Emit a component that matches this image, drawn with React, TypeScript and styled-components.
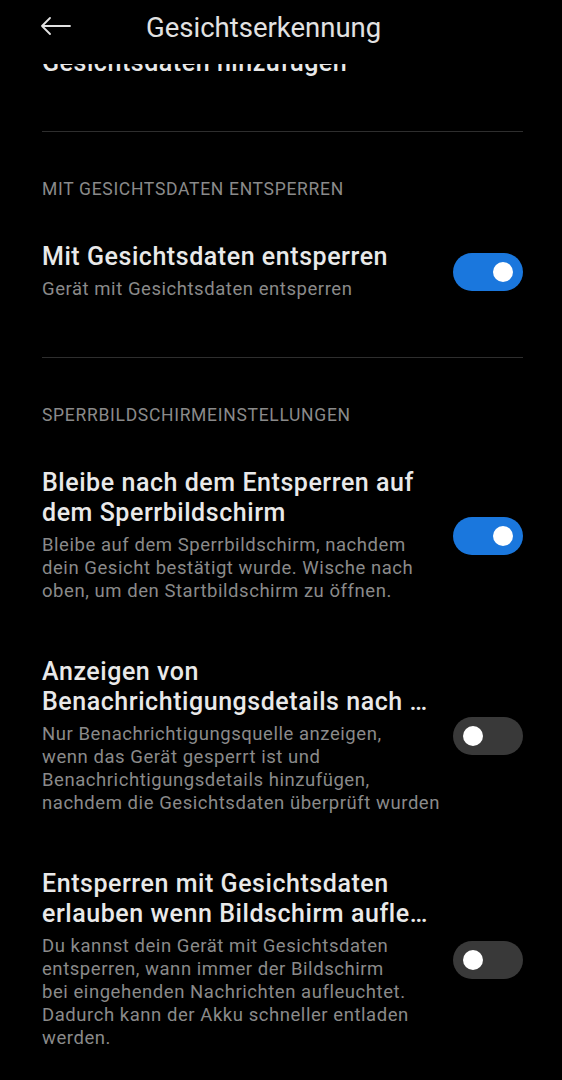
import styled, { createGlobalStyle } from "styled-components";

const GlobalStyle = createGlobalStyle`
  html, body {
    margin: 0;
    padding: 0;
    background: #000;
  }
  body {
    font-family: Roboto, "Noto Sans", sans-serif;
    -webkit-font-smoothing: antialiased;
  }
`;

const Page = styled.div`
  width: 562px;
  height: 1080px;
  overflow: hidden;
  background: #000;
  display: flex;
  flex-direction: column;
`;

const Header = styled.header`
  position: relative;
  z-index: 2;
  height: 64px;
  flex: none;
  background: #000;
  display: flex;
  align-items: flex-start;
  padding: 0 40px;
`;

const BackButton = styled.div`
  width: 34px;
  height: 52px;
  display: flex;
  align-items: center;
  color: #e2e2e2;
`;

const HeaderTitle = styled.h1`
  flex: 1;
  margin: 0;
  padding-left: 72px;
  height: 55px;
  line-height: 55px;
  font-size: 27.5px;
  font-weight: 400;
  color: #e2e2e2;
`;

const Content = styled.main`
  margin-top: -16px;
  padding: 0 39px 0 42px;
  display: flex;
  flex-direction: column;
`;

const Section = styled.section<{ $bottom: number }>`
  display: flex;
  flex-direction: column;
  padding-bottom: ${(p) => p.$bottom}px;
`;

const Divider = styled.hr`
  margin: 0;
  border: none;
  height: 1px;
  background: #2e2e2e;
`;

const SectionLabel = styled.div`
  padding: 47px 0 16px;
  font-size: 17.5px;
  letter-spacing: 0.7px;
  line-height: 20px;
  color: #8a8a8a;
  text-transform: uppercase;
`;

const Row = styled.div<{ $compact?: boolean }>`
  display: flex;
  align-items: center;
  gap: 10px;
  padding: ${(p) => (p.$compact ? "0 0 53px" : "27px 0")};
`;

const Texts = styled.div`
  flex: 1;
  min-width: 0;
  display: flex;
  flex-direction: column;
`;

const Title = styled.div`
  font-size: 25px;
  letter-spacing: 0.55px;
  line-height: 30px;
  font-weight: 500;
  color: #e9e9e9;
`;

const Subtitle = styled.div`
  margin-top: 6px;
  font-size: 18.5px;
  letter-spacing: 0.55px;
  line-height: 23px;
  color: #8a8a8a;
`;

const Line = styled.span`
  display: block;
  white-space: nowrap;
`;

const Track = styled.div<{ $on: boolean }>`
  flex: none;
  width: 70px;
  height: 38px;
  border-radius: 19px;
  background: ${(p) => (p.$on ? "#1a77dd" : "#393939")};
  display: flex;
  align-items: center;
  justify-content: ${(p) => (p.$on ? "flex-end" : "flex-start")};
  padding: 0 10px;
  box-sizing: border-box;
`;

const Knob = styled.div`
  width: 20px;
  height: 20px;
  border-radius: 50%;
  background: #fff;
`;

const BackArrow = () => (
  <svg width="31" height="18" viewBox="0 0 31 18" fill="none">
    <path
      d="M30 9H2M10 1L2 9l8 8"
      stroke="currentColor"
      strokeWidth="1.8"
      strokeLinecap="round"
      strokeLinejoin="round"
    />
  </svg>
);

interface SettingProps {
  title: string[];
  subtitle?: string[];
  on?: boolean;
  compact?: boolean;
}

const Setting = ({ title, subtitle, on, compact }: SettingProps) => (
  <Row $compact={compact}>
    <Texts>
      <Title>
        {title.map((t) => (
          <Line key={t}>{t}</Line>
        ))}
      </Title>
      {subtitle ? (
        <Subtitle>
          {subtitle.map((t) => (
            <Line key={t}>{t}</Line>
          ))}
        </Subtitle>
      ) : null}
    </Texts>
    {on !== undefined ? (
      <Track $on={on}>
        <Knob />
      </Track>
    ) : null}
  </Row>
);

export default function App() {
  return (
    <>
      <GlobalStyle />
      <Page>
        <Header>
          <BackButton>
            <BackArrow />
          </BackButton>
          <HeaderTitle>Gesichtserkennung</HeaderTitle>
        </Header>
        <Content>
          <Section $bottom={0}>
            <Setting title={["Gesichtsdaten hinzufügen"]} compact />
          </Section>
          <Divider />
          <Section $bottom={29}>
            <SectionLabel>Mit Gesichtsdaten entsperren</SectionLabel>
            <Setting
              title={["Mit Gesichtsdaten entsperren"]}
              subtitle={["Gerät mit Gesichtsdaten entsperren"]}
              on
            />
          </Section>
          <Divider />
          <Section $bottom={0}>
            <SectionLabel>Sperrbildschirmeinstellungen</SectionLabel>
            <Setting
              title={["Bleibe nach dem Entsperren auf", "dem Sperrbildschirm"]}
              subtitle={[
                "Bleibe auf dem Sperrbildschirm, nachdem",
                "dein Gesicht bestätigt wurde. Wische nach",
                "oben, um den Startbildschirm zu öffnen.",
              ]}
              on
            />
            <Setting
              title={["Anzeigen von", "Benachrichtigungsdetails nach …"]}
              subtitle={[
                "Nur Benachrichtigungsquelle anzeigen,",
                "wenn das Gerät gesperrt ist und",
                "Benachrichtigungsdetails hinzufügen,",
                "nachdem die Gesichtsdaten überprüft wurden",
              ]}
              on={false}
            />
            <Setting
              title={["Entsperren mit Gesichtsdaten", "erlauben wenn Bildschirm aufle…"]}
              subtitle={[
                "Du kannst dein Gerät mit Gesichtsdaten",
                "entsperren, wann immer der Bildschirm",
                "bei eingehenden Nachrichten aufleuchtet.",
                "Dadurch kann der Akku schneller entladen",
                "werden.",
              ]}
              on={false}
            />
          </Section>
        </Content>
      </Page>
    </>
  );
}
